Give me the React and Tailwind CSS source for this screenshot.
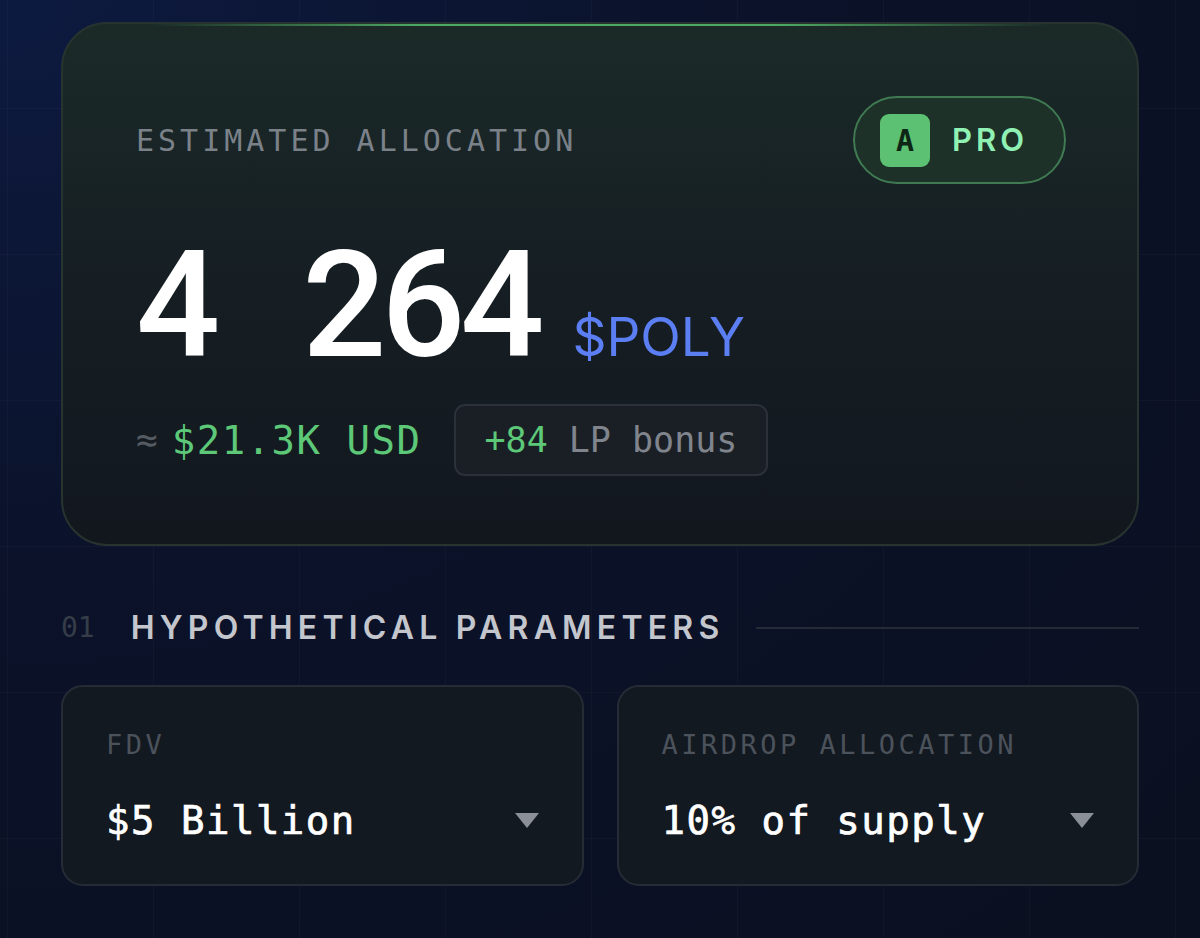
import React from 'react';

const mono = "font-['DejaVu_Sans_Mono',monospace]";
const sans = "font-['Inter',sans-serif]";
const display = "font-['Roboto',sans-serif]";

function Caret() {
  return (
    <svg width="24" height="15" viewBox="0 0 24 15" className="shrink-0">
      <polygon points="0,0 24,0 12,15" fill="#8a8f98" />
    </svg>
  );
}

function SelectCard({ label, value }) {
  return (
    <div className="flex-1 rounded-[22px] border-2 border-[#262c35] bg-[#131920] px-[43px] pt-[44px] pb-[44px]">
      <div className={`${mono} text-[27px] leading-none tracking-[3.5px] text-[#4b525b]`}>{label}</div>
      <div className="mt-[43px] flex items-center justify-between">
        <span className={`${mono} text-[39px] leading-none tracking-[1.5px] text-white [-webkit-text-stroke:0.7px_#ffffff]`}>{value}</span>
        <Caret />
      </div>
    </div>
  );
}

export default function App() {
  return (
    <div className="min-h-[938px] w-[1200px] bg-[radial-gradient(ellipse_at_top_left,#0d1a40_0%,#0b1229_45%,#0b1020_100%)]">
      <div className="min-h-[938px] bg-[linear-gradient(to_right,rgba(255,255,255,0.025)_1px,transparent_1px),linear-gradient(to_bottom,rgba(255,255,255,0.025)_1px,transparent_1px)] bg-[size:146px_146px] bg-[position:7px_108px] px-[61px] pt-[22px]">
        {/* Allocation card */}
        <div className="relative overflow-hidden rounded-[46px] border-2 border-[#27332f] bg-[linear-gradient(to_bottom,#1b2a27_0%,#161f24_45%,#12171e_100%)] px-[73px] pt-[72px] pb-[68px]">
          <div className="absolute left-[8%] right-[8%] top-0 h-[2px] bg-[linear-gradient(to_right,transparent,#4da863_30%,#4da863_70%,transparent)]" />
          <div className="flex items-center justify-between">
            <span className={`${mono} mt-[2px] text-[30px] leading-none tracking-[4px] text-[#7b8189]`}>ESTIMATED ALLOCATION</span>
            <div className="-mr-[2px] flex h-[88px] items-center gap-[22px] rounded-full border-2 border-[#3f7a52] bg-[#1d3128] pl-[25px] pr-[36px]">
              <div className={`${mono} flex h-[53px] w-[50px] items-center justify-center rounded-[9px] bg-[#5cc172] text-[30px] font-bold text-[#0d2615]`}>A</div>
              <span className={`${sans} text-[31px] font-semibold tracking-[4px] text-[#8ff2b4]`}>PRO</span>
            </div>
          </div>

          <div className="mt-[48px] flex items-baseline">
            <span className={`${display} text-[148px] leading-none font-medium text-white`}>4</span>
            <span className={`${display} ml-[82px] text-[148px] leading-none font-medium tracking-[-5px] text-white`}>264</span>
            <span className={`${sans} ml-[33px] text-[53px] leading-none text-[#5b7ff2]`}>$POLY</span>
          </div>

          <div className="mt-[24px] flex items-center">
            <span className={`${mono} text-[36px] leading-none text-[#555b63]`}>≈</span>
            <span className={`${mono} ml-[14px] text-[39px] leading-none tracking-[1.5px] text-[#5cc878]`}>$21.3K USD</span>
            <div className={`${mono} ml-[32px] flex h-[72px] items-center rounded-[11px] border-2 border-[#2c3139] bg-[#1a1f26] px-[29px] text-[35px] leading-none`}>
              <span className="text-[#5cc878]">+84</span>
              <span className="text-[#80858d]">&nbsp;LP bonus</span>
            </div>
          </div>
        </div>

        {/* Section header */}
        <div className="mt-[66px] flex items-center">
          <span className={`${mono} text-[28px] leading-none text-[#363d48]`}>01</span>
          <span className={`${sans} ml-[36px] text-[32px] leading-none font-semibold tracking-[5.2px] text-[#c3c6cc]`}>HYPOTHETICAL PARAMETERS</span>
          <div className="ml-[32px] h-[2px] flex-1 bg-[#242b37]" />
        </div>

        {/* Parameter selects */}
        <div className="mt-[41px] flex gap-[33px]">
          <SelectCard label="FDV" value="$5 Billion" />
          <SelectCard label="AIRDROP ALLOCATION" value="10% of supply" />
        </div>
      </div>
    </div>
  );
}
